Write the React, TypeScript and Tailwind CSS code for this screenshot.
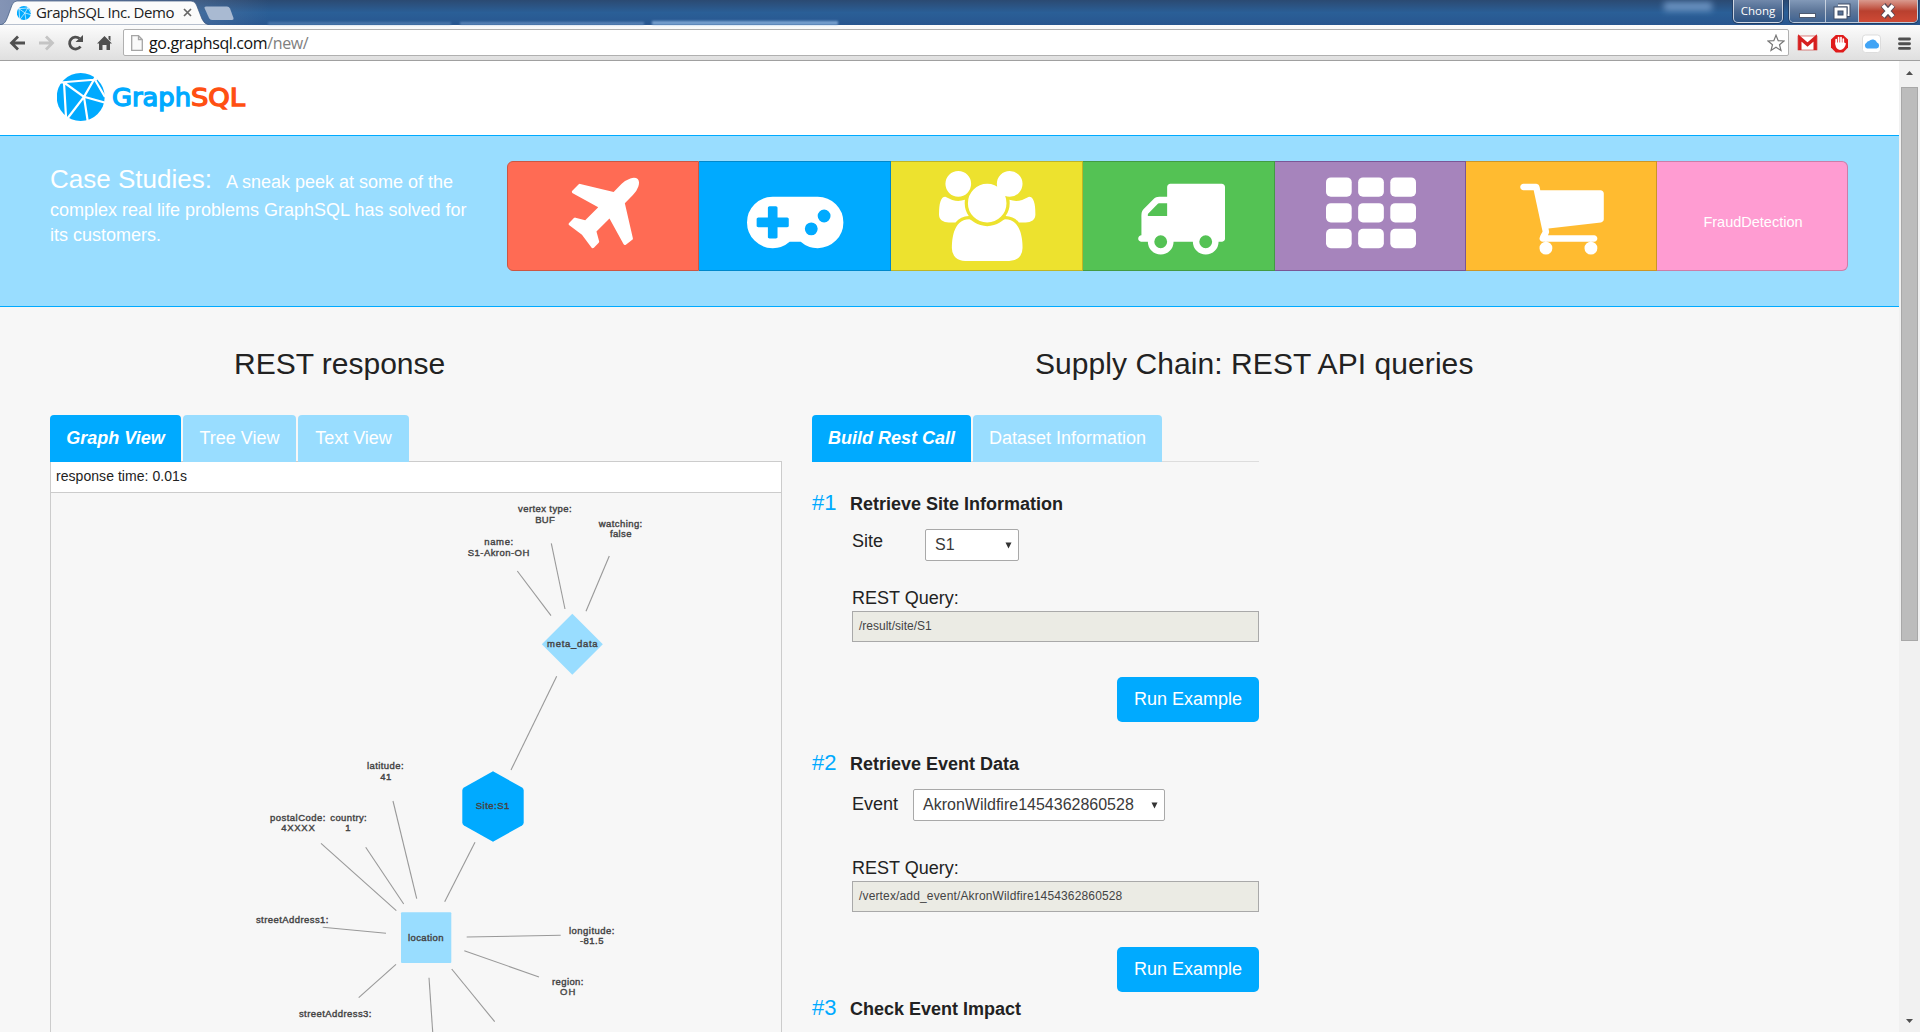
import React from "react";

const CASES = [
  {
    name: "plane", bg: "bg-[#ff6b54] border-[#cc5643] w-[192px] rounded-l-[6px] border-l", box: "0 0 1792 1792",
    d: "M1568 160q44 52 12 148t-108 172l-161 161 160 696q5 19-12 33l-128 96q-7 6-19 6-4 0-7-1-15-3-21-16l-279-508-259 259 53 194q5 17-8 31l-96 96q-9 9-23 9h-2q-15-2-24-13l-189-252-252-189q-11-7-13-23-1-13 9-25l96-97q9-9 23-9 6 0 8 1l194 53 259-259-508-279q-14-8-17-24-2-16 9-27l128-128q14-13 30-8l665 159 160-160q76-76 172-108t148 12z",
  },
  {
    name: "gamepad", bg: "bg-[#00aaff] border-[#0088cc] w-[192px]", box: "0 0 1920 1792",
    d: "M832 1088v-128q0-14-9-23t-23-9h-192v-192q0-14-9-23t-23-9h-128q-14 0-23 9t-9 23v192h-192q-14 0-23 9t-9 23v128q0 14 9 23t23 9h192v192q0 14 9 23t23 9h128q14 0 23-9t9-23v-192h192q14 0 23-9t9-23zm576 64q0-53-37.5-90.5t-90.5-37.5-90.5 37.5-37.5 90.5 37.5 90.5 90.5 37.5 90.5-37.5 37.5-90.5zm256-256q0-53-37.5-90.5t-90.5-37.5-90.5 37.5-37.5 90.5 37.5 90.5 90.5 37.5 90.5-37.5 37.5-90.5zm256 128q0 212-150 362t-362 150q-192 0-338-128h-220q-146 128-338 128-212 0-362-150t-150-362 150-362 362-150h896q212 0 362 150t150 362z",
  },
  {
    name: "users", bg: "bg-[#ede22e] border-[#beb525] w-[192px]", box: "0 0 1920 1792",
    d: "M593 896q-162 5-265 128h-134q-82 0-138-40.5t-56-118.5q0-353 124-353 6 0 43.5 21t97.5 42.5 119 21.5q67 0 133-23-5 37-5 66 0 139 81 256zm1071 637q0 120-73 189.5t-194 69.5h-874q-121 0-194-69.5t-73-189.5q0-53 3.5-103.5t14-109 26.5-108.5 43-97.5 62-81 85.5-53.5 111.5-20q10 0 43 21.5t73 48 107 48 135 21.5 135-21.5 107-48 73-48 43-21.5q61 0 111.5 20t85.5 53.5 62 81 43 97.5 26.5 108.5 14 109 3.5 103.5zm-1024-1277q0 106-75 181t-181 75-181-75-75-181 75-181 181-75 181 75 75 181zm704 384q0 159-112.5 271.5t-271.5 112.5-271.5-112.5-112.5-271.5 112.5-271.5 271.5-112.5 271.5 112.5 112.5 271.5zm576 225q0 78-56 118.5t-138 40.5h-134q-103-123-265-128 81-117 81-256 0-29-5-66 66 23 133 23 59 0 119-21.5t97.5-42.5 43.5-21q124 0 124 353zm-256-609q0 106-75 181t-181 75-181-75-75-181 75-181 181-75 181 75 75 181z",
  },
  {
    name: "truck", bg: "bg-[#54c254] border-[#439b43] w-[192px]", box: "64 0 1792 1792",
    d: "M704 1408q0-52-38-90t-90-38-90 38-38 90 38 90 90 38 90-38 38-90zm-384-512h384v-256h-158q-13 0-22 9l-195 195q-9 9-9 22v30zm1280 512q0-52-38-90t-90-38-90 38-38 90 38 90 90 38 90-38 38-90zm256-1088v1024q0 15-4 26.5t-13.5 18.5-16.5 11.5-23.5 6-22.5 2-25.5 0-22.5-.5q0 106-75 181t-181 75-181-75-75-181h-384q0 106-75 181t-181 75-181-75-75-181h-64q-3 0-22.5.5t-25.5 0-22.5-2-23.5-6-16.5-11.5-13.5-18.5-4-26.5q0-26 19-45t45-19v-320q0-8-.5-35t0-38 2.5-34.5 6.5-37 14-30.5 22.5-30l198-198q19-19 50.5-32t58.5-13h160v-192q0-26 19-45t45-19h1024q26 0 45 19t19 45z",
  },
  { name: "th", bg: "bg-[#a684bc] border-[#7a5696] w-[191px]", box: "0 0 1792 1792", d: "" },
  {
    name: "cart", bg: "bg-[#ffbb30] border-[#cc9626] w-[191px]", box: "0 0 1792 1792",
    d: "M704 1536q0 52-38 90t-90 38-90-38-38-90 38-90 90-38 90 38 38 90zm896 0q0 52-38 90t-90 38-90-38-38-90 38-90 90-38 90 38 38 90zm128-1088v512q0 24-16.5 42.5t-40.5 21.5l-1044 122q13 60 13 70 0 16-24 64h920q26 0 45 19t19 45-19 45-45 19h-1024q-26 0-45-19t-19-45q0-11 8-31.5t16-36 21.5-40 15.5-29.5l-177-823h-204q-26 0-45-19t-19-45 19-45 45-19h256q16 0 28.5 6.5t19.5 15.5 13 24.5 8 26 5.5 29.5 4.5 26h1201q26 0 45 19t19 45z",
  },
];

const EDGES = [
  [517.3, 571, 551, 615.7], [551.3, 543.3, 565, 609], [609.3, 556, 586, 611.3],
  [556.7, 676.3, 511, 770], [475, 842.3, 444.7, 901.7], [321, 843.3, 396.3, 910.7],
  [365.7, 847.3, 403.7, 904], [393, 801, 416.7, 898.7], [322.7, 927.3, 386, 933.3],
  [396, 964.3, 358.7, 997.7], [429, 977.7, 432.7, 1032], [451.7, 969, 494.7, 1021.7],
  [464.3, 950.7, 539, 977], [466.7, 937, 560.7, 935.3],
];

const LABELS: [string, number, number, number][] = [
  ["vertex type:", 544.8, 511.7, 53.5], ["BUF", 545, 522.5, 19.5], ["watching:", 620.5, 526.5, 43.5],
  ["false", 620.7, 536.5, 21.5], ["name:", 498.7, 544.5, 29], ["S1-Akron-OH", 498.5, 555.5, 61.5],
  ["meta_data", 572.3, 646.5, 50.5], ["latitude:", 385.3, 769.3, 36.5], ["41", 385.7, 780.3, 11],
  ["postalCode:", 297.7, 821.3, 55.5], ["4XXXX", 298, 831.3, 33.5], ["country:", 348.5, 820.8, 36.5],
  ["1", 348, 830.5, 5.5], ["streetAddress1:", 292.2, 922.5, 72.5], ["location", 425.7, 940.5, 35.5],
  ["Site:S1", 492.5, 809.3, 33.5], ["longitude:", 591.7, 933.5, 45.5], ["-81.5", 591.7, 943.5, 23.5],
  ["region:", 567.7, 985.3, 31.5], ["OH", 567.7, 995.3, 15.5], ["streetAddress3:", 335.2, 1016.5, 72.5],
];

function Globe({ className }: { className: string }) {
  return (
    <svg viewBox="0 0 48 48" className={className}>
      <circle cx="23.7" cy="24" r="24" fill="#00aaff" />
      <g stroke="#fff" strokeWidth="2.200" fill="none">
        <path d="M3 9.500L40 6.500M7 9.500L9 44M7 9.500L27 23.800L38.500 4M27 23.800L49 30M27 23.800L10 46M27 23.800L31 50M37.500 6L48 24" />
      </g>
    </svg>
  );
}

function Browser() {
  return (
    <div className="flex h-[61px] shrink-0 flex-col font-['Open_Sans',sans-serif]">
      <div className="relative flex h-[25px] bg-gradient-to-b from-[#2b4a72] via-[#2a5f97] to-[#28568f]">
        <div className="absolute inset-0 bg-gradient-to-r from-[#8494b5] via-transparent via-[14%] to-transparent" />
        <div className="absolute left-[268px] top-[22px] h-[3px] w-[183px] bg-[#6b97c6] opacity-50 blur-[1px]" />
        <div className="absolute left-[460px] top-[22px] h-[3px] w-[184px] bg-[#7da5d3] opacity-60 blur-[1px]" />
        <div className="absolute left-[652px] top-[21px] h-[4px] w-[186px] bg-[#8db4e0] opacity-80 blur-[1px]" />
        <div className="absolute left-[1664px] top-[2px] h-[9px] w-[48px] bg-[#7ba2d0] opacity-80 blur-[3px]" />
        <svg className="absolute left-0 top-0" width="240" height="25" viewBox="0 0 240 25">
          <path d="M0 25C5 24 6 21 8 16L12 5Q13.500 1 17 1H191Q195 1 196.500 5L202 19Q204 24 209 25Z" fill="#fbfbfb" stroke="#39547c" strokeWidth=".7" />
          <path d="M204.500 8Q204 6.500 206 6.500H227Q229 6.500 230 8.500L233.500 18Q234 20 232 20H212Q210 20 209 18Z" fill="#a9bad2" />
        </svg>
        <div className="relative flex items-center pl-[17px]">
          <Globe className="h-[14px] w-[14px]" />
          <span className="ml-[5px] w-[138px] whitespace-nowrap text-[15px] leading-[23px] tracking-[-0.44px] text-[#222]">GraphSQL Inc. Demo</span>
          <svg className="ml-[9px]" width="9" height="9" viewBox="0 0 9 9"><path d="M1 1L8 8M8 1L1 8" stroke="#666" strokeWidth="1.700" /></svg>
        </div>
        <div className="absolute right-[2px] top-0 flex h-[24px] items-start gap-[6px]">
          <div className="h-[23px] w-[50px] rounded-b-[5px] border border-t-0 border-white/70 bg-gradient-to-b from-[#7088ab] via-[#4b688f] to-[#2d5484] text-center text-[11.500px] leading-[22px] text-white shadow-[0_0_0_1px_#233f66]">Chong</div>
          <div className="flex h-[23px] overflow-hidden rounded-b-[5px] border border-t-0 border-white/70 shadow-[0_0_0_1px_#233f66]">
            <div className="flex w-[36px] items-center justify-center border-r border-white/60 bg-gradient-to-b from-[#8299b8] via-[#5d7699] to-[#3f6391]">
              <div className="mt-[8px] h-[5px] w-[17px] border border-[#4e5a70] bg-white" />
            </div>
            <div className="flex w-[33px] items-center justify-center border-r border-white/60 bg-gradient-to-b from-[#8299b8] via-[#5d7699] to-[#3f6391]">
              <svg width="18" height="17" viewBox="0 0 18 17" fill="none"><path d="M5 2.500H15.500V12H13" stroke="#3f4d66" strokeWidth="4" /><path d="M5 2.500H15.500V12H13" stroke="#fff" strokeWidth="2" /><rect x="3" y="6" width="9" height="8" stroke="#3f4d66" strokeWidth="5" /><rect x="3" y="6" width="9" height="8" stroke="#fff" strokeWidth="3" /></svg>
            </div>
            <div className="flex w-[58px] items-center justify-center bg-gradient-to-b from-[#d99a8f] via-[#b9402f] to-[#cf4a35]">
              <svg width="18" height="16" viewBox="0 0 18 16"><path d="M4 2L14 14M14 2L4 14" stroke="#5d4a55" strokeWidth="6" /><path d="M4 2.500L14 13.500M14 2.500L4 13.500" stroke="#fff" strokeWidth="3.800" /></svg>
            </div>
          </div>
        </div>
      </div>
      <div className="flex h-[36px] items-center border-b border-[#a0a0a0] bg-gradient-to-b from-[#fcfcfc] to-[#dfdfdf] pl-[9px]">
        <svg width="112" height="20" viewBox="9 33 112 20" className="shrink-0" fill="none">
          <path d="M25 43H11.500M18 36.500L11.500 43L18 49.500" stroke="#505050" strokeWidth="2.800" />
          <path d="M39 43H52.500M46 36.500L52.500 43L46 49.500" stroke="#c4c4c4" strokeWidth="2.800" />
          <path d="M80.500 46.500A6 6 0 1 1 79.500 38.500" stroke="#505050" strokeWidth="2.800" />
          <path d="M83 35V42H75.500Z" fill="#505050" />
          <path d="M97 43.500L104.500 36L112 43.500H110V50H106.500V45H102.500V50H99V43.500ZM108.500 36H110.500V41L108.500 39Z" fill="#505050" />
        </svg>
        <div className="ml-[2px] flex h-[27px] w-[1666px] items-center rounded-[2px] border border-[#b0b0b0] bg-white pl-[7px]">
          <svg width="12" height="16" viewBox="0 0 12 16" fill="#fafafa" stroke="#a5a5a5" strokeWidth="1.300"><path d="M.7 .7H7.500L11.300 4.500V15.300H.7ZM7.500 .7V4.500H11.300" /></svg>
          <span className="ml-[6px] text-[16px] leading-[24px] tracking-[-0.38px] text-[#111]">go.graphsql.com<span className="text-[#808080]">/new/</span></span>
          <svg className="ml-auto mr-[3px]" width="18" height="18" viewBox="0 0 18 18" fill="#fff" stroke="#777" strokeWidth="1.200"><path d="M9 1.200L11.200 6.700L17 7L12.500 10.700L14 16.500L9 13.300L4 16.500L5.500 10.700L1 7L6.800 6.700Z" /></svg>
        </div>
        <svg width="122" height="24" viewBox="1792 30 122 24" className="ml-[3px] shrink-0">
          <rect x="1798" y="35" width="19" height="14" fill="#fff" stroke="#c9302c" strokeWidth=".6" />
          <path d="M1799.800 49V37L1807.500 43.500L1815.200 37V49" fill="none" stroke="#d61f1f" strokeWidth="3.400" />
          <path d="M1835.800 34H1843.200L1848 38.500V46.500L1843.200 51.500H1835.800L1831 46.500V38.500Z" fill="#e01b1b" />
          <path d="M1836.200 43V38.500M1838.600 43V36.500M1841 43V36.500M1843.300 43V38" stroke="#fff" strokeWidth="1.700" strokeLinecap="round" />
          <path d="M1835.300 41.500H1844.200L1846 42.500Q1844.500 49 1840 49Q1835.300 48.500 1835.300 41.500Z" fill="#fff" />
          <rect x="1862.500" y="34" width="18" height="17.500" rx="3" fill="#fff" stroke="#ddd" />
          <path d="M1867 47.500A3.200 3.200 0 0 1 1866.500 41.700A3 3 0 0 1 1869 40A4.800 4.800 0 0 1 1877 41.500A3.100 3.100 0 0 1 1876.500 47.500Z" fill="#41a4f5" />
          <path d="M1899.500 38H1909.500M1899.500 42.700H1909.500M1899.500 47.400H1909.500" stroke="#505050" strokeWidth="2.900" strokeLinecap="round" />
        </svg>
      </div>
    </div>
  );
}

function Tab({ label, active, width }: { label: string; active?: boolean; width: string }) {
  return (
    <div className={(active
      ? "h-[47px] rounded-t-[4px] bg-[#00aaff] text-center text-[18px] font-bold italic leading-[47px] text-white "
      : "h-[47px] rounded-t-[4px] bg-[#99ddff] text-center text-[18px] leading-[47px] text-white ") + width}>
      {label}
    </div>
  );
}

function Graph() {
  return (
    <svg width="730" height="539" viewBox="51 493 730 539" className="block">
      <g stroke="#999" strokeWidth="1.100">
        {EDGES.map(([x1, y1, x2, y2], i) => <line key={i} x1={x1} y1={y1} x2={x2} y2={y2} />)}
      </g>
      <path d="M572.300 613.800L602.800 644.300L572.300 674.800L541.800 644.300Z" fill="#99ddff" />
      <path d="M493 771.300L522 787.500Q523.700 788.500 523.700 790.500V822.500Q523.700 824.500 522 825.500L493 841.700L464 825.500Q462.300 824.500 462.300 822.500V790.500Q462.300 788.500 464 787.500Z" fill="#00aaff" />
      <rect x="401" y="912.300" width="50.300" height="50.700" rx="1" fill="#99ddff" />
      <g fill="#444" stroke="#444" strokeWidth=".4" fontFamily="Liberation Sans, sans-serif" fontSize="9.500" textAnchor="middle">
        {LABELS.map(([t, x, y, w]) => <text key={t + x} x={x} y={y} textLength={w}>{t}</text>)}
      </g>
    </svg>
  );
}

function Select({ value, className }: { value: string; className: string }) {
  return (
    <div className={"flex h-[32px] items-center justify-between rounded-[2px] border border-[#a9a9a9] bg-white pl-[9px] pr-[6px] text-[16px] leading-[30px] text-[#3a3a3a] " + className}>
      <span>{value}</span>
      <svg width="7" height="7" viewBox="0 0 7 7"><path d="M.5 .5H6.500L3.500 6.500Z" fill="#333" /></svg>
    </div>
  );
}

function SectionTitle({ n, title }: { n: string; title: string }) {
  return (
    <div className="flex h-[30px] items-baseline leading-[30px]">
      <span className="w-[38px] text-[22px] text-[#00aaff]">{n}</span>
      <span className="text-[18px] font-bold">{title}</span>
    </div>
  );
}

function Section({ n, title, label, labelClass, children, query, queryClass, rowClass }: {
  n: string; title: string; label: string; labelClass: string; children: React.ReactNode; query: string; queryClass: string; rowClass: string;
}) {
  return (
    <section className="flex flex-col">
      <SectionTitle n={n} title={title} />
      <div className={"flex pl-10 " + rowClass}>
        <span className={"text-[18px] leading-[24px] " + labelClass}>{label}</span>
        {children}
      </div>
      <div className="flex flex-col pl-10">
        <span className="text-[18px] leading-[24px]">REST Query:</span>
        <div className={"mt-px h-[31px] border border-[#a9a9a9] bg-[#ebebe4] pl-[6px] text-[12px] leading-[28px] text-[#444] " + queryClass}>{query}</div>
        <button className="mt-[35px] h-[45px] w-[142px] self-end rounded-[5px] bg-[#00aaff] text-[18px] leading-[45px] text-white">Run Example</button>
      </div>
    </section>
  );
}

export default function App() {
  return (
    <div className="flex h-[1032px] w-[1920px] flex-col overflow-hidden bg-[#f7f7f7] font-['Liberation_Sans',Arial,sans-serif] text-[#222]">
      <Browser />
      <div className="flex min-h-0 flex-1">
        <div className="flex w-[1899px] shrink-0 flex-col overflow-hidden">
          <header className="flex h-[74px] shrink-0 items-start bg-white pl-[57px] pt-[12px]">
            <Globe className="h-[48px] w-[48px]" />
            <svg width="140" height="40" viewBox="0 0 140 40" className="ml-[6px] mt-[5px]" fontFamily="DejaVu Sans, sans-serif" fontSize="24" strokeWidth="1.300">
              <text x="1" y="28" textLength="79" lengthAdjust="spacingAndGlyphs" fill="#00aaff" stroke="#00aaff">Graph</text>
              <text x="80" y="28" textLength="54" lengthAdjust="spacingAndGlyphs" fill="#ff4f12" stroke="#ff4f12">SQL</text>
            </svg>
          </header>
          <div className="flex h-[172px] shrink-0 border-y border-[#00aaff] bg-[#99ddff] pl-[50px] text-white">
            <p className="w-[457px] shrink-0 pt-[24px] text-[18px] leading-[25px]">
              <span className="mr-[14px] text-[26px] leading-[38px]">Case Studies:</span>A sneak peek at some of the<br />complex real life problems GraphSQL has solved for<br />its customers.
            </p>
            <div className="mt-[25px] flex h-[110px]">
              {CASES.map((c) => (
                <div key={c.name} className={"flex justify-center border-y border-r pl-[2px] pt-[9px] " + c.bg}>
                  <svg height="90" width={c.box.includes("1920") ? 96.4 : 90} viewBox={c.box} fill="#fff">
                    {c.name === "th"
                      ? [0, 1, 2].flatMap((r) => [0, 1, 2].map((k) => <rect key={r + "-" + k} x={k * 640} y={128 + r * 512} width="512" height="384" rx="96" />))
                      : <path d={c.d} />}
                  </svg>
                </div>
              ))}
              <div className="flex w-[191px] items-center justify-center rounded-r-[6px] border border-l-0 border-[#cc7da8] bg-[#ff9cd2] pl-[2px] pt-[14px] text-[14.500px]">FraudDetection</div>
            </div>
          </div>
          <main className="flex min-h-0 flex-1 pl-[50px] pt-[37px]">
            <div className="flex w-[732px] shrink-0 flex-col">
              <h2 className="mb-[31px] pl-[184px] text-[30px] leading-[40px]">REST response</h2>
              <div className="relative -mb-px flex gap-[2px]">
                <Tab label="Graph View" active width="w-[131px]" />
                <Tab label="Tree View" width="w-[113px]" />
                <Tab label="Text View" width="w-[111px]" />
              </div>
              <div className="border border-b-0 border-[#ccc]">
                <div className="h-[31px] border-b border-[#ccc] bg-white pl-[5px] text-[14px] leading-[28px] tracking-[0.05px]">response time: 0.01s</div>
                <Graph />
              </div>
            </div>
            <div className="ml-[30px] flex flex-col">
              <h2 className="mb-[31px] pl-[223px] text-[30px] leading-[40px] tracking-[0.07px]">Supply Chain: REST API queries</h2>
              <div className="flex w-[447px] flex-col">
                <div className="flex h-[47px] gap-[2px] border-b border-[#ddd]">
                  <Tab label="Build Rest Call" active width="w-[159px]" />
                  <Tab label="Dataset Information" width="w-[189px]" />
                </div>
                <div className="mt-[26px]">
                  <Section n="#1" title="Retrieve Site Information" label="Site" labelClass="w-[73px]" query="/result/site/S1" queryClass="" rowClass="pt-[11px] h-[68px]">
                    <Select value="S1" className="w-[94px]" />
                  </Section>
                </div>
                <div className="mt-[26px]">
                  <Section n="#2" title="Retrieve Event Data" label="Event" labelClass="w-[61px] pt-[3px]" query="/vertex/add_event/AkronWildfire1454362860528" queryClass="tracking-[0.15px]" rowClass="pt-[11px] h-[78px]">
                    <Select value="AkronWildfire1454362860528" className="w-[252px]" />
                  </Section>
                </div>
                <div className="mt-px">
                  <SectionTitle n="#3" title="Check Event Impact" />
                </div>
              </div>
            </div>
          </main>
        </div>
        <div className="flex flex-1 flex-col items-center bg-[#f1f1f1]">
          <div className="flex h-[26px] items-center"><svg width="7" height="4" viewBox="0 0 7 4" className="-mt-[3px]"><path d="M0 4L3.500 0L7 4Z" fill="#505050" /></svg></div>
          <div className="h-[554px] w-[17px] border border-[#a8a8a8] bg-[#bcbcbc]" />
          <svg width="7" height="4" viewBox="0 0 7 4" className="mb-[9px] mt-auto"><path d="M0 0L3.500 4L7 0Z" fill="#505050" /></svg>
        </div>
      </div>
    </div>
  );
}
